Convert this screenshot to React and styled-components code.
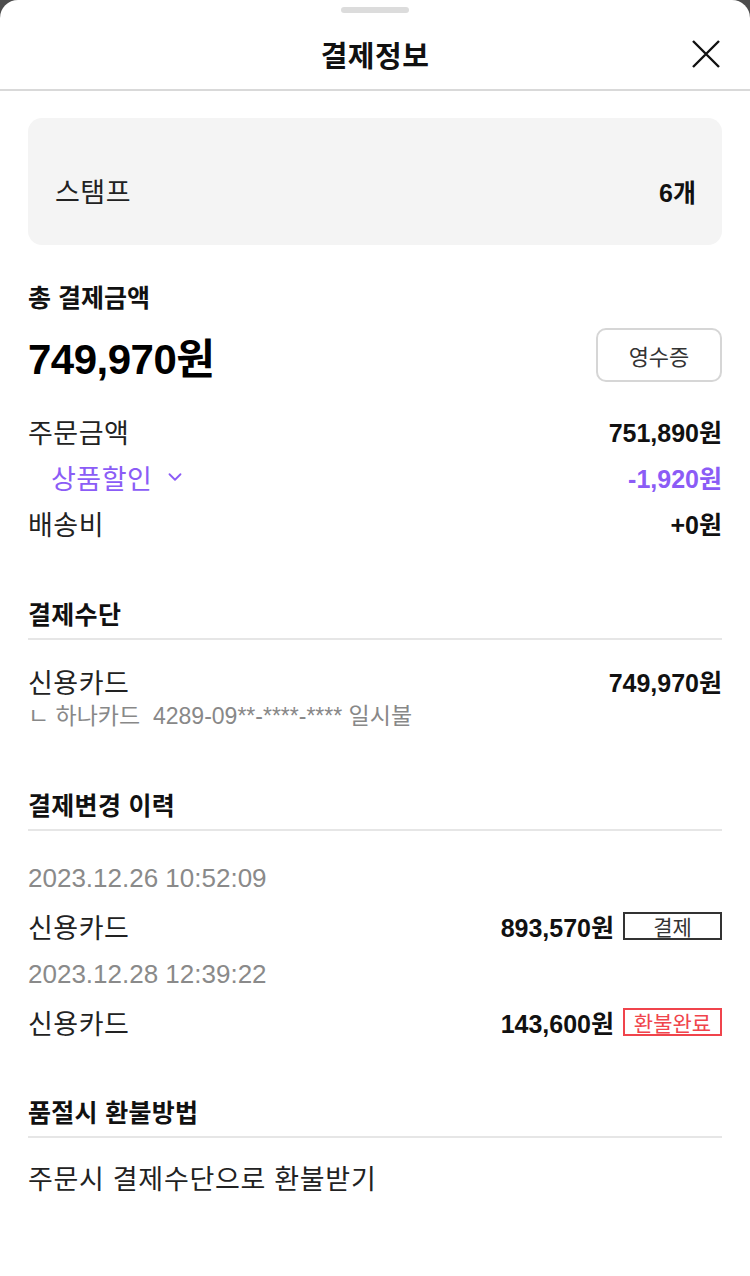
import styled, { createGlobalStyle } from 'styled-components';
import { ChevronDown } from 'lucide-react';

const GlobalStyle = createGlobalStyle`
  * { box-sizing: border-box; }
  body {
    margin: 0;
    background: #4d4d4d;
    font-family: "Liberation Sans", "Noto Sans CJK KR", sans-serif;
    color: #222;
  }
`;

// 시트 전체
const Sheet = styled.div`
  background: #fff;
  border-radius: 18px 18px 0 0;
  min-height: 1276px;
  display: flex;
  flex-direction: column;
`;

const Handle = styled.div`
  width: 68px;
  height: 6px;
  border-radius: 3px;
  background: #dcdcdc;
  margin: 7px auto 0;
`;

const Header = styled.header`
  height: 78px;
  display: grid;
  grid-template-columns: 1fr auto 1fr;
  align-items: center;
  border-bottom: 2px solid #d9d9d9;
  padding: 6px 28px 0 28px;
`;

const Title = styled.h1`
  grid-column: 2;
  margin: 0;
  font-size: 29px;
  font-weight: 700;
  letter-spacing: 0.5px;
  color: #111;
`;

const CloseBtn = styled.button`
  justify-self: end;
  border: 0;
  background: none;
  padding: 0;
  width: 32px;
  height: 32px;
  display: flex;
  align-items: center;
  justify-content: center;
`;

const Body = styled.div`
  padding: 27px 28px 0;
`;

// 스탬프 카드
const StampCard = styled.div`
  background: #f4f4f4;
  border-radius: 14px;
  padding: 60px 26px 37px 27px;
  display: flex;
  justify-content: space-between;
  align-items: center;
  line-height: 30px;
  font-size: 27px;
  letter-spacing: 0.5px;
`;

const Strong = styled.span`
  font-weight: 700;
  color: ${(p) => p.color || '#111'};
  font-size: ${(p) => p.size || '25px'};
  letter-spacing: 0;
`;

const Label = styled.div`
  font-size: 25px;
  font-weight: 700;
  line-height: 30px;
  color: #111;
  margin-top: ${(p) => p.top || '0'};
`;

const TotalRow = styled.div`
  margin-top: 15px;
  height: 54px;
  display: flex;
  align-items: center;
  justify-content: space-between;
`;

const BigAmount = styled.span`
  font-size: 42px;
  font-weight: 700;
  color: #000;
  letter-spacing: -0.5px;
`;

const ReceiptBtn = styled.button`
  width: 126px;
  height: 54px;
  border: 2px solid #d6d6d6;
  border-radius: 10px;
  background: #fff;
  font-family: inherit;
  font-size: 22px;
  color: #333;
`;

const PriceList = styled.div`
  margin-top: 26px;
`;

const Row = styled.div`
  display: flex;
  justify-content: space-between;
  align-items: center;
  height: ${(p) => p.h || '46px'};
  font-size: 27px;
  letter-spacing: 0.5px;
  color: ${(p) => p.color || '#222'};
  padding-left: ${(p) => p.indent || '0'};
`;

const Discount = styled.span`
  display: inline-flex;
  align-items: center;
  gap: 12px;
`;

// 섹션 제목
const SectionTitle = styled.div`
  font-size: 25px;
  font-weight: 700;
  line-height: 30px;
  letter-spacing: 0.3px;
  color: #111;
  padding-bottom: 8px;
  border-bottom: 2px solid #e6e6e6;
  margin-top: ${(p) => p.top};
`;

const Block = styled.div`
  margin-top: ${(p) => p.top};
`;

const SubText = styled.div`
  font-size: 23px;
  line-height: 36px;
  color: #888;
`;

const DateText = styled.div`
  font-size: 26px;
  line-height: 48px;
  color: #8a8a8a;
`;

const Right = styled.span`
  display: inline-flex;
  align-items: center;
  gap: 9px;
`;

const Badge = styled.span`
  width: 99px;
  height: 28px;
  border: 2px solid ${(p) => p.color};
  color: ${(p) => p.color};
  font-size: 21px;
  letter-spacing: 0;
  display: inline-flex;
  align-items: center;
  justify-content: center;
`;

const PlainText = styled.div`
  font-size: 27px;
  letter-spacing: 0.7px;
  line-height: 36px;
  color: #222;
`;

const PURPLE = '#8b5cf6';

export default function App() {
  return (
    <>
      <GlobalStyle />
      <Sheet>
        <Handle />
        <Header>
          <Title>결제정보</Title>
          <CloseBtn aria-label="닫기">
            <svg width="28" height="28" viewBox="0 0 28 28">
              <path d="M1 1 L27 27 M27 1 L1 27" stroke="#111" strokeWidth="2.4" />
            </svg>
          </CloseBtn>
        </Header>

        <Body>
          <StampCard>
            <span>스탬프</span>
            <Strong>6개</Strong>
          </StampCard>

          <Label top="38px">총 결제금액</Label>
          <TotalRow>
            <BigAmount>749,970원</BigAmount>
            <ReceiptBtn>영수증</ReceiptBtn>
          </TotalRow>

          <PriceList>
            <Row>
              <span>주문금액</span>
              <Strong>751,890원</Strong>
            </Row>
            <Row color={PURPLE} indent="23px">
              <Discount>
                상품할인
                <ChevronDown size={22} strokeWidth={2} color={PURPLE} />
              </Discount>
              <Strong color={PURPLE}>-1,920원</Strong>
            </Row>
            <Row>
              <span>배송비</span>
              <Strong>+0원</Strong>
            </Row>
          </PriceList>

          <SectionTitle top="54px">결제수단</SectionTitle>
          <Block top="24px">
            <Row h="34px">
              <span>신용카드</span>
              <Strong>749,970원</Strong>
            </Row>
            <SubText>ㄴ 하나카드&nbsp; 4289-09**-****-**** 일시불</SubText>
          </Block>

          <SectionTitle top="57px">결제변경 이력</SectionTitle>
          <Block top="23px">
            <DateText>2023.12.26 10:52:09</DateText>
            <Row h="48px">
              <span>신용카드</span>
              <Right>
                <Strong>893,570원</Strong>
                <Badge color="#333">결제</Badge>
              </Right>
            </Row>
            <DateText>2023.12.28 12:39:22</DateText>
            <Row h="48px">
              <span>신용카드</span>
              <Right>
                <Strong>143,600원</Strong>
                <Badge color="#f0444c">환불완료</Badge>
              </Right>
            </Row>
          </Block>

          <SectionTitle top="52px">품절시 환불방법</SectionTitle>
          <Block top="24px">
            <PlainText>주문시 결제수단으로 환불받기</PlainText>
          </Block>
        </Body>
      </Sheet>
    </>
  );
}
